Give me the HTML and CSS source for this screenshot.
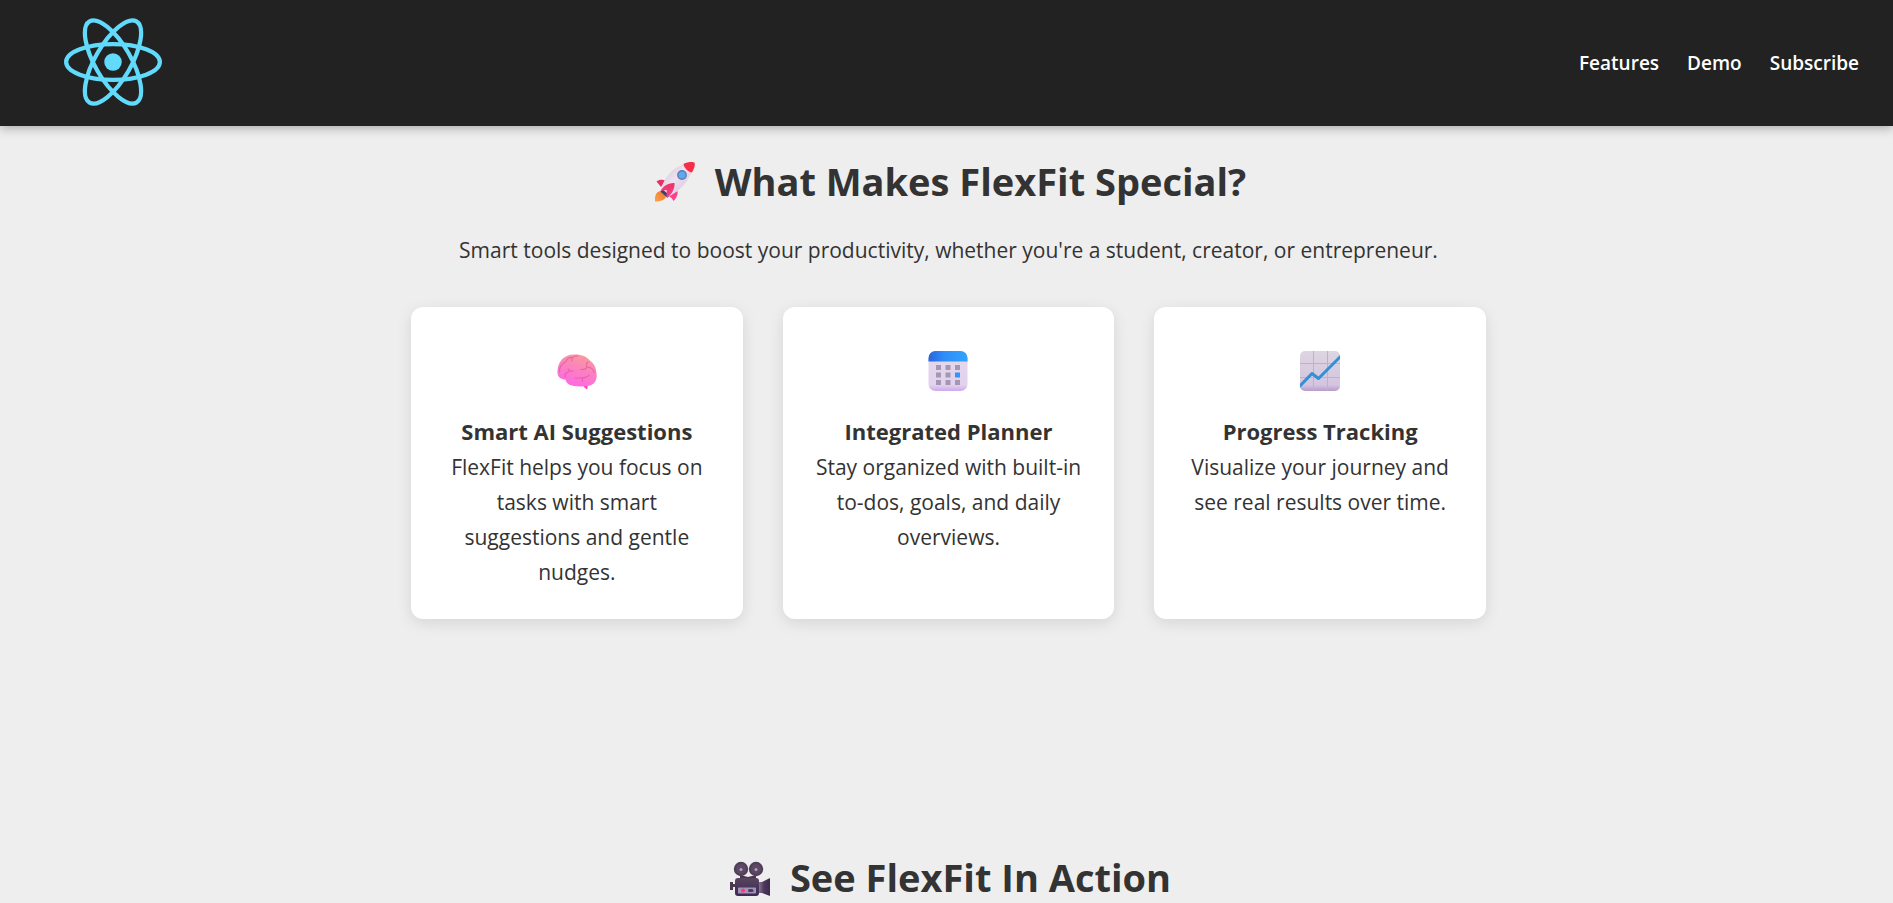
FILE: index.html
```
<!DOCTYPE html>
<html lang="en">
<head>
<meta charset="utf-8">
<meta name="viewport" content="width=device-width, initial-scale=1">
<title>FlexFit</title>
<link rel="stylesheet" href="styles.css">
</head>
<body>
<header class="site-header">
  <a class="logo-link" href="#" aria-label="FlexFit home">
    <svg class="logo" viewBox="-11.5 -10.23174 23 20.46348" aria-hidden="true">
      <circle r="2.05" fill="#61dafb"/>
      <g stroke="#61dafb" fill="none">
        <ellipse rx="11" ry="4.2"/>
        <ellipse rx="11" ry="4.2" transform="rotate(60)"/>
        <ellipse rx="11" ry="4.2" transform="rotate(120)"/>
      </g>
    </svg>
  </a>
  <nav class="site-nav">
    <a href="#features">Features</a>
    <a href="#demo">Demo</a>
    <a href="#subscribe">Subscribe</a>
  </nav>
</header>
<main class="content">
  <section class="features" id="features">
    <h2 class="section-title">
      <svg class="title-icon" viewBox="0 0 40 40" aria-hidden="true">
        <defs>
          <linearGradient id="hull" x1="0" y1="0" x2="1" y2="1"><stop offset="0" stop-color="#cbbfce"/><stop offset=".45" stop-color="#eee2f0"/><stop offset="1" stop-color="#cdb9d3"/></linearGradient>
          <linearGradient id="fin" x1="0" y1="0" x2="0" y2="1"><stop offset="0" stop-color="#e8375f"/><stop offset="1" stop-color="#ff3b91"/></linearGradient>
          <linearGradient id="flame" x1="1" y1="0" x2="0" y2="1"><stop offset="0" stop-color="#e97832"/><stop offset="1" stop-color="#ffa045"/></linearGradient>
        </defs>
        <path d="M1.500 19.500c2.500-2 6-2 9-1L6 25z" fill="#e92f67"/>
        <path d="M22.500 29c.8 3-1.500 8-4 10-1-2.500-3.500-4.500-5-5z" fill="#ff3f8c"/>
        <path d="M0 39.500C-.5 34 1 29.500 6 29l5 5c-.5 4-5.500 5.500-11 5.500z" fill="url(#flame)"/>
        <path d="M6 28C9 15 19 3 35 .7c5 .8 4 7 .5 11.800-5 10.500-13 17.500-22.500 22.500z" fill="url(#hull)"/>
        <path d="M28.500 2C32.500-.2 38.500-.5 39.500.8c.8 2-.2 6-2.700 9.700-3.500-.5-7.500-4-8.300-8.500z" fill="#f52f48"/>
        <path d="m6.500 28.500 7 6" stroke="#40406f" stroke-width="3"/>
        <path d="M5.500 29C7.500 25 13 20.500 19.500 21c.5 6-3 12-8 14.500l.2-7.500z" fill="url(#fin)"/>
        <circle cx="27" cy="13" r="4.900" fill="#647ba5"/><circle cx="27" cy="13" r="3.500" fill="#5aa8f9"/>
      </svg>
      What Makes FlexFit Special?
    </h2>
    <p class="lead">Smart tools designed to boost your productivity, whether you're a student, creator, or entrepreneur.</p>
    <div class="cards">
      <article class="card">
        <svg class="card-icon" viewBox="0 0 40 40" aria-hidden="true">
          <defs><linearGradient id="brain" x1=".75" y1="0" x2=".4" y2="1"><stop offset="0" stop-color="#fd9d98"/><stop offset=".45" stop-color="#fa83bd"/><stop offset="1" stop-color="#ff68e5"/></linearGradient></defs>
          <path d="M25 33h6l-.8 5.500c-2-1-4-3.500-5.200-5.500z" fill="#ff45ba"/>
          <path d="M.5 22C0 12 6 3.500 17 3.500c7 0 12 1.500 16 6 4 3 6.500 8 6.500 13 1 7-2.500 11.500-7.500 12.200-7 1-15 1-19-.7-2.500-1.200-4-3-4.500-5.500C4 28.500.5 26 .5 22z" fill="url(#brain)"/>
          <path d="M2.500 21c-.5-5 2-8 6.500-10.500 1-3 4-4.500 7-4 1-1.500 3-2 5-1.500M15 7v3M8 26c-1-4 3-6 8-6M11 18c1 2 3 2.500 5 2M31 11c-1.500 1-2 3-1 5.500-2 2-4 2.500-6 1.800M30 16.500c4-.5 6.500 2 7 5M18 27c3 1 5-1 8 0 3-1 5-1 6-3M26 27c-1 1-1 2-.5 3" stroke="#df599c" stroke-width="1.200" fill="none" stroke-linecap="round" opacity=".7"/>
        </svg>
        <h3 class="card-title">Smart AI Suggestions</h3>
        <p class="card-text">FlexFit helps you focus on tasks with smart suggestions and gentle nudges.</p>
      </article>
      <article class="card">
        <svg class="card-icon" viewBox="0 0 40 40" aria-hidden="true">
          <defs>
            <linearGradient id="calTop"><stop offset="0" stop-color="#2865dc"/><stop offset=".4" stop-color="#2f8df8"/><stop offset="1" stop-color="#31a3ff"/></linearGradient>
            <linearGradient id="calBody" x1="0" y1="0" x2="0" y2="1"><stop offset="0" stop-color="#e5d8eb"/><stop offset=".85" stop-color="#e2d2ee"/><stop offset="1" stop-color="#cda8ed"/></linearGradient>
          </defs>
          <rect x=".5" width="39" height="40" rx="7" fill="url(#calBody)"/>
          <path d="M.5 10.500V7a7 7 0 0 1 7-7h25a7 7 0 0 1 7 7v3.500z" fill="url(#calTop)"/>
          <path d="M8 14h5v5H8zm9.500 0h5v5h-5zm9.500 0h5v5h-5zM8 21.500h5v5H8zm9.500 0h5v5h-5zM8 29h5v5H8zm9.500 0h5v5h-5zm9.500 0h5v5h-5z" fill="#a398b1"/>
          <path d="M27 21.500h5v5h-5z" fill="#3096fc"/>
        </svg>
        <h3 class="card-title">Integrated Planner</h3>
        <p class="card-text">Stay organized with built-in to-dos, goals, and daily overviews.</p>
      </article>
      <article class="card">
        <svg class="card-icon" viewBox="0 0 40 40" aria-hidden="true">
          <defs>
            <linearGradient id="chartBody" x1="0" y1="0" x2="0" y2="1"><stop offset="0" stop-color="#ddd5e0"/><stop offset=".85" stop-color="#d4c5e0"/><stop offset="1" stop-color="#b79ac9"/></linearGradient>
            <clipPath id="chartClip"><rect width="40" height="40" rx="5"/></clipPath>
          </defs>
          <g clip-path="url(#chartClip)" fill="none">
            <rect width="40" height="40" fill="url(#chartBody)"/>
            <path d="M13.500 0v40M27.500 0v40M0 12.500h40M0 26.500h40" stroke="#bdb3c3"/>
            <path d="M-1 36 12 22.500l6.500 5L41 5" stroke="#338fd6" stroke-width="3" stroke-linejoin="round"/>
          </g>
        </svg>
        <h3 class="card-title">Progress Tracking</h3>
        <p class="card-text">Visualize your journey and see real results over time.</p>
      </article>
    </div>
  </section>
  <section class="demo" id="demo">
    <h2 class="section-title">
      <svg class="title-icon" viewBox="0 -2 40 40" aria-hidden="true">
        <defs>
          <linearGradient id="camBody" x1="0" y1="0" x2="0" y2="1"><stop offset="0" stop-color="#58445f"/><stop offset="1" stop-color="#3d2856"/></linearGradient>
          <linearGradient id="camLens"><stop offset="0" stop-color="#8d7e99"/><stop offset=".5" stop-color="#4c365d"/><stop offset="1" stop-color="#3e294e"/></linearGradient>
        </defs>
        <path d="M0 22h3v8H0zM3 24h3v3H3z" fill="#4b3855"/>
        <path d="m10 15 8 2 8-2v6H10z" fill="#49354f"/>
        <path d="M28 22h4l8-4v18l-8-3h-4z" fill="url(#camLens)"/>
        <rect x="5" y="18" width="24" height="18" rx="3" fill="url(#camBody)"/>
        <circle cx="11" cy="9" r="7.200" fill="#513e58"/><circle cx="26" cy="9" r="7.200" fill="#513e58"/>
        <circle cx="11" cy="9" r="5" fill="#5c4965"/><circle cx="26" cy="9" r="5" fill="#5c4965"/>
        <circle cx="11" cy="9.500" r="1.500" fill="#b2a4ba"/><circle cx="26" cy="9.500" r="1.500" fill="#b2a4ba"/>
        <rect x="8" y="27.500" width="18" height="6" rx=".7" fill="#a294b5"/>
        <circle cx="13" cy="30.500" r="1.900" fill="#ff3976"/><rect x="18" y="29" width="5.500" height="3" rx="1.500" fill="#4b3a61"/>
      </svg>
      See FlexFit In Action
    </h2>
  </section>
</main>
</body>
</html>
```
FILE: styles.css
```
* {
  box-sizing: border-box;
  margin: 0;
}

body {
  background: #eee;
  color: #333;
  font-family: "Open Sans", "Noto Sans", sans-serif;
  font-size: 21px;
  line-height: 35px;
  overflow: hidden;
}

.site-header {
  display: flex;
  align-items: center;
  justify-content: space-between;
  padding: 18px 34px 20px 64px;
  background: #222;
  box-shadow: 0 2px 10px rgba(0, 0, 0, 0.3);
}

.logo-link,
.logo {
  display: block;
}

.logo {
  width: 98px;
  height: 88px;
}

.site-nav {
  display: flex;
  gap: 28px;
  padding-top: 2px;
}

.site-nav a {
  color: #fff;
  font-size: 19px;
  font-weight: 600;
  text-decoration: none;
}

.content {
  padding-left: 4px;
  text-align: center;
}

.features {
  max-width: 1075px;
  min-height: 696px;
  margin: 0 auto;
  padding-top: 23px;
}

.section-title {
  display: flex;
  align-items: center;
  justify-content: center;
  gap: 20px;
  padding-left: 4px;
  font-size: 38px;
  line-height: 64px;
}

.title-icon,
.card-icon {
  width: 40px;
  height: 40px;
  flex: none;
}

.title-icon {
  margin-top: 2px;
}

.lead {
  margin-top: 20px;
}

.cards {
  display: grid;
  grid-template-columns: repeat(3, minmax(0, 1fr));
  gap: 40px;
  margin-top: 39px;
}

.card {
  min-height: 312px;
  padding: 44px 30px 29px;
  background: #fff;
  border-radius: 12px;
  box-shadow: 0 4px 15px rgba(0, 0, 0, 0.1);
}

.card-icon {
  display: block;
  margin: 0 auto 22px;
}

.card-title {
  font-size: 22px;
  line-height: 37px;
}

.demo {
  padding-top: 23px;
}
```
